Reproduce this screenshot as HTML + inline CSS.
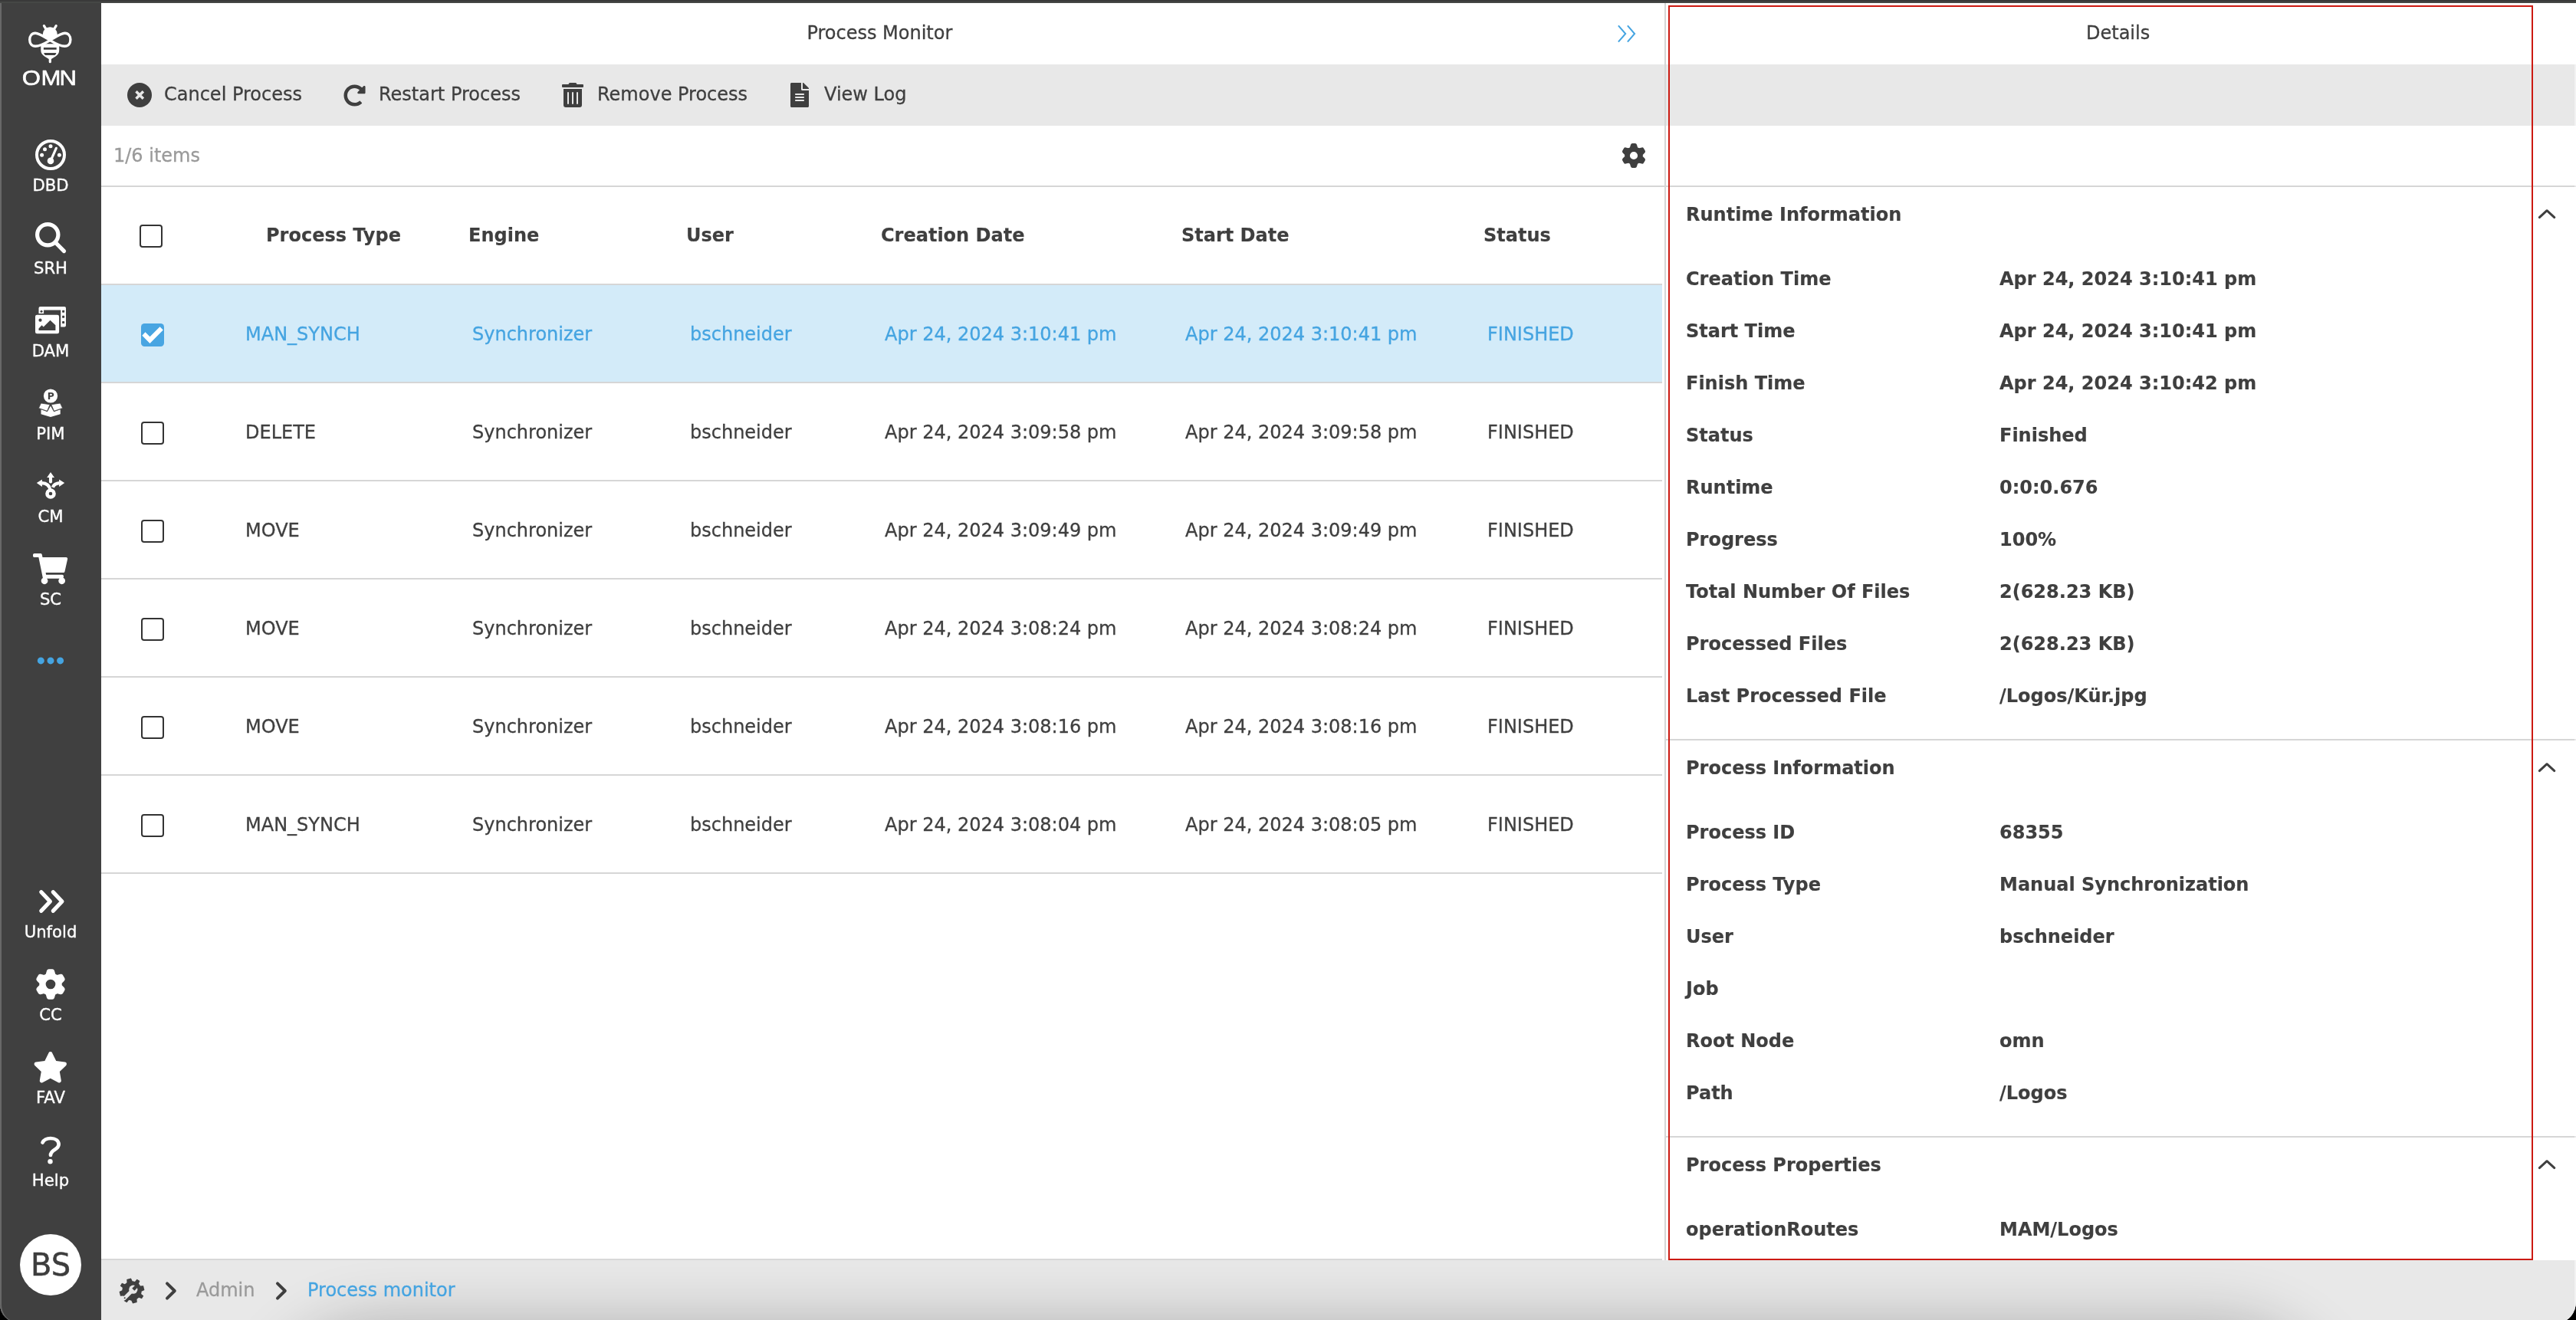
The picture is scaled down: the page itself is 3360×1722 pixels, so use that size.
<!DOCTYPE html>
<html lang="en">
<head>
<meta charset="utf-8">
<title>Process Monitor</title>
<style>
*{box-sizing:border-box;margin:0;padding:0}
html,body{width:3360px;height:1722px;overflow:hidden;background:#000}
body{position:relative;font-family:"DejaVu Sans","Liberation Sans",sans-serif;font-size:24px;line-height:28px;color:#3f3f3f;-webkit-text-stroke:0.3px}
#app{position:absolute;left:0;top:0;width:3360px;height:1725px;overflow:hidden;will-change:transform;background:#fff;border-radius:0 0 22px 23px / 0 0 27px 23px}
.abs,.t,.b,.ln,.cb,.ic{position:absolute}
.t,.b{white-space:nowrap;height:28px}
.b{font-weight:bold;-webkit-text-stroke:0.15px}
.blue{color:#45a4e1}
.gray{color:#9a9a9a}
.ln{background:#d6d6d6;height:2px}
#side{left:0;top:0;width:132px;height:1725px;background:#404040}
#side .lab{position:absolute;left:0;width:132px;text-align:center;color:#fff;font-size:21.2px;line-height:24px;height:24px;white-space:nowrap;-webkit-text-stroke:0.35px #fff}
#topbar{left:0;top:0;width:3360px;height:4px;background:linear-gradient(#3a3a3a 0,#3a3a3a 2px,#454745 2px,#454745 4px)}
#tool{left:132px;top:84px;width:3228px;height:80px;background:#e8e8e8}
#foot{left:132px;top:1644px;width:3228px;height:81px;background:#e8e8e8;overflow:hidden}
#foot i{position:absolute;left:215px;top:79px;width:2700px;height:300px;border-radius:160px;box-shadow:0 0 80px 0 rgba(0,0,0,.235)}
#sel{left:132px;top:372px;width:2036px;height:126px;background:#d3ebf9}
.cb{width:30px;height:30px;border:2px solid #333;border-radius:4px;background:#fff}
.cb.on{border:0;background:#48a5e2;border-radius:4.5px}
svg{position:absolute;overflow:visible}
</style>
</head>
<body>
<div id="app">
<!-- main chrome -->
<div class="abs" id="tool"></div>
<div class="abs" id="foot"><i></i></div>
<div class="abs" id="sel"></div>
<div class="ln" style="left:132px;top:242px;width:2039px;height:2px;"></div>
<div class="ln" style="left:132px;top:370px;width:2036px;height:2px;"></div>
<div class="ln" style="left:132px;top:498px;width:2036px;height:2px;"></div>
<div class="ln" style="left:132px;top:626px;width:2036px;height:2px;"></div>
<div class="ln" style="left:132px;top:754px;width:2036px;height:2px;"></div>
<div class="ln" style="left:132px;top:882px;width:2036px;height:2px;"></div>
<div class="ln" style="left:132px;top:1010px;width:2036px;height:2px;"></div>
<div class="ln" style="left:132px;top:1138px;width:2036px;height:2px;"></div>
<div class="ln" style="left:2171px;top:4px;width:2px;height:1640px"></div>
<div class="ln" style="left:2173px;top:242px;width:1187px;height:2px;"></div>
<div class="ln" style="left:2173px;top:964px;width:1187px;height:2px;"></div>
<div class="ln" style="left:2173px;top:1482px;width:1187px;height:2px;"></div>
<div class="ln" style="left:132px;top:1642px;width:2036px;height:2px;background:#d8d8d8;"></div>
<div class="t" style="left:1052.4px;top:29px;">Process Monitor</div>
<div class="t" style="left:214px;top:109px;">Cancel Process</div>
<div class="t" style="left:494px;top:109px;">Restart Process</div>
<div class="t" style="left:779px;top:109px;">Remove Process</div>
<div class="t" style="left:1075px;top:109px;">View Log</div>
<div class="t gray" style="left:148px;top:189px;">1/6 items</div>
<div class="b" style="left:347px;top:293px;">Process Type</div>
<div class="b" style="left:611px;top:293px;">Engine</div>
<div class="b" style="left:895px;top:293px;">User</div>
<div class="b" style="left:1149px;top:293px;">Creation Date</div>
<div class="b" style="left:1541px;top:293px;">Start Date</div>
<div class="b" style="left:1935px;top:293px;">Status</div>
<div class="cb" style="left:182px;top:293px"></div>
<div class="cb on" style="left:184px;top:422px"><svg width="30" height="30" viewBox="0 0 30 30" style="left:0;top:0"><path d="M1.4 15.7 5.5 11.3 11.5 17.3 24.5 4.2 28.8 8.5 11.5 26.1z" fill="#fff"/></svg></div>
<div class="t blue" style="left:320px;top:422px;">MAN_SYNCH</div>
<div class="t blue" style="left:616px;top:422px;">Synchronizer</div>
<div class="t blue" style="left:900px;top:422px;">bschneider</div>
<div class="t blue" style="left:1154px;top:422px;">Apr 24, 2024 3:10:41 pm</div>
<div class="t blue" style="left:1546px;top:422px;">Apr 24, 2024 3:10:41 pm</div>
<div class="t blue" style="left:1940px;top:422px;">FINISHED</div>
<div class="cb" style="left:184px;top:550px"></div>
<div class="t" style="left:320px;top:550px;">DELETE</div>
<div class="t" style="left:616px;top:550px;">Synchronizer</div>
<div class="t" style="left:900px;top:550px;">bschneider</div>
<div class="t" style="left:1154px;top:550px;">Apr 24, 2024 3:09:58 pm</div>
<div class="t" style="left:1546px;top:550px;">Apr 24, 2024 3:09:58 pm</div>
<div class="t" style="left:1940px;top:550px;">FINISHED</div>
<div class="cb" style="left:184px;top:678px"></div>
<div class="t" style="left:320px;top:678px;">MOVE</div>
<div class="t" style="left:616px;top:678px;">Synchronizer</div>
<div class="t" style="left:900px;top:678px;">bschneider</div>
<div class="t" style="left:1154px;top:678px;">Apr 24, 2024 3:09:49 pm</div>
<div class="t" style="left:1546px;top:678px;">Apr 24, 2024 3:09:49 pm</div>
<div class="t" style="left:1940px;top:678px;">FINISHED</div>
<div class="cb" style="left:184px;top:806px"></div>
<div class="t" style="left:320px;top:806px;">MOVE</div>
<div class="t" style="left:616px;top:806px;">Synchronizer</div>
<div class="t" style="left:900px;top:806px;">bschneider</div>
<div class="t" style="left:1154px;top:806px;">Apr 24, 2024 3:08:24 pm</div>
<div class="t" style="left:1546px;top:806px;">Apr 24, 2024 3:08:24 pm</div>
<div class="t" style="left:1940px;top:806px;">FINISHED</div>
<div class="cb" style="left:184px;top:934px"></div>
<div class="t" style="left:320px;top:934px;">MOVE</div>
<div class="t" style="left:616px;top:934px;">Synchronizer</div>
<div class="t" style="left:900px;top:934px;">bschneider</div>
<div class="t" style="left:1154px;top:934px;">Apr 24, 2024 3:08:16 pm</div>
<div class="t" style="left:1546px;top:934px;">Apr 24, 2024 3:08:16 pm</div>
<div class="t" style="left:1940px;top:934px;">FINISHED</div>
<div class="cb" style="left:184px;top:1062px"></div>
<div class="t" style="left:320px;top:1062px;">MAN_SYNCH</div>
<div class="t" style="left:616px;top:1062px;">Synchronizer</div>
<div class="t" style="left:900px;top:1062px;">bschneider</div>
<div class="t" style="left:1154px;top:1062px;">Apr 24, 2024 3:08:04 pm</div>
<div class="t" style="left:1546px;top:1062px;">Apr 24, 2024 3:08:05 pm</div>
<div class="t" style="left:1940px;top:1062px;">FINISHED</div>
<div class="t gray" style="left:256px;top:1669px;">Admin</div>
<div class="t blue" style="left:401px;top:1669px;">Process monitor</div>
<div class="t" style="left:2721px;top:29px;">Details</div>
<div class="b" style="left:2199px;top:266px;">Runtime Information</div>
<div class="b" style="left:2199px;top:350px;">Creation Time</div>
<div class="b" style="left:2608px;top:350px;">Apr 24, 2024 3:10:41 pm</div>
<div class="b" style="left:2199px;top:418px;">Start Time</div>
<div class="b" style="left:2608px;top:418px;">Apr 24, 2024 3:10:41 pm</div>
<div class="b" style="left:2199px;top:486px;">Finish Time</div>
<div class="b" style="left:2608px;top:486px;">Apr 24, 2024 3:10:42 pm</div>
<div class="b" style="left:2199px;top:554px;">Status</div>
<div class="b" style="left:2608px;top:554px;">Finished</div>
<div class="b" style="left:2199px;top:622px;">Runtime</div>
<div class="b" style="left:2608px;top:622px;">0:0:0.676</div>
<div class="b" style="left:2199px;top:690px;">Progress</div>
<div class="b" style="left:2608px;top:690px;">100%</div>
<div class="b" style="left:2199px;top:758px;">Total Number Of Files</div>
<div class="b" style="left:2608px;top:758px;">2(628.23 KB)</div>
<div class="b" style="left:2199px;top:826px;">Processed Files</div>
<div class="b" style="left:2608px;top:826px;">2(628.23 KB)</div>
<div class="b" style="left:2199px;top:894px;">Last Processed File</div>
<div class="b" style="left:2608px;top:894px;">/Logos/Kür.jpg</div>
<div class="b" style="left:2199px;top:988px;">Process Information</div>
<div class="b" style="left:2199px;top:1072px;">Process ID</div>
<div class="b" style="left:2608px;top:1072px;">68355</div>
<div class="b" style="left:2199px;top:1140px;">Process Type</div>
<div class="b" style="left:2608px;top:1140px;">Manual Synchronization</div>
<div class="b" style="left:2199px;top:1208px;">User</div>
<div class="b" style="left:2608px;top:1208px;">bschneider</div>
<div class="b" style="left:2199px;top:1276px;">Job</div>
<div class="b" style="left:2199px;top:1344px;">Root Node</div>
<div class="b" style="left:2608px;top:1344px;">omn</div>
<div class="b" style="left:2199px;top:1412px;">Path</div>
<div class="b" style="left:2608px;top:1412px;">/Logos</div>
<div class="b" style="left:2199px;top:1506px;">Process Properties</div>
<div class="b" style="left:2199px;top:1590px;">operationRoutes</div>
<div class="b" style="left:2608px;top:1590px;">MAM/Logos</div>
<div class="abs" style="left:2176px;top:7px;width:1128px;height:1637px;border:2px solid #cc1a12"></div>
<div class="abs" style="left:3358px;top:4px;width:2px;height:1720px;background:rgba(255,255,255,.45)"></div>
<!-- toolbar: cancel -->
<svg width="32" height="32" viewBox="0 0 32 32" style="left:166px;top:108px"><circle cx="16" cy="16" r="16" fill="#3f3f3f"/><path d="M11.500 11.300L20.900 20.700M20.900 11.300L11.500 20.700" stroke="#e8e8e8" stroke-width="3.500"/></svg>
<!-- toolbar: restart -->
<svg width="29" height="29" viewBox="0 0 512 512" style="left:447.600px;top:109.500px"><path fill="#3f3f3f" d="M256.455 8c66.269.119 126.437 26.233 170.859 68.685l35.715-35.715C478.149 25.851 504 36.559 504 57.941V192c0 13.255-10.745 24-24 24H345.941c-21.382 0-32.090-25.851-16.971-40.971l41.750-41.750c-30.864-28.899-70.801-44.907-113.230-45.273-92.398-.798-170.283 73.977-169.484 169.442C88.764 348.009 162.184 424 256 424c41.127 0 79.997-14.678 110.629-41.556 4.743-4.161 11.906-3.908 16.368.553l39.662 39.662c4.872 4.872 4.631 12.815-.482 17.433C378.202 479.813 319.926 504 256 504 119.034 504 8.001 392.967 8 256.002 7.999 119.193 119.646 7.755 256.455 8z"/></svg>
<!-- toolbar: trash -->
<svg width="28" height="32" viewBox="0 0 448 512" style="left:733px;top:108px"><path fill="#3f3f3f" d="M32 464a48 48 0 0 0 48 48h288a48 48 0 0 0 48-48V128H32zm272-256a16 16 0 0 1 32 0v224a16 16 0 0 1-32 0zm-96 0a16 16 0 0 1 32 0v224a16 16 0 0 1-32 0zm-96 0a16 16 0 0 1 32 0v224a16 16 0 0 1-32 0zM432 32H312l-9.400-18.700A24 24 0 0 0 281.100 0H166.800a23.720 23.720 0 0 0-21.400 13.300L136 32H16A16 16 0 0 0 0 48v32a16 16 0 0 0 16 16h416a16 16 0 0 0 16-16V48a16 16 0 0 0-16-16z"/></svg>
<!-- toolbar: file -->
<svg width="24" height="32" viewBox="0 0 384 512" style="left:1031px;top:108px"><path fill="#3f3f3f" d="M224 136V0H24C10.700 0 0 10.700 0 24v464c0 13.300 10.700 24 24 24h336c13.300 0 24-10.700 24-24V160H248c-13.200 0-24-10.800-24-24zm64 236c0 6.600-5.400 12-12 12H108c-6.600 0-12-5.400-12-12v-8c0-6.600 5.400-12 12-12h168c6.600 0 12 5.400 12 12v8zm0-64c0 6.600-5.400 12-12 12H108c-6.600 0-12-5.400-12-12v-8c0-6.600 5.400-12 12-12h168c6.600 0 12 5.400 12 12v8zm0-72v8c0 6.600-5.400 12-12 12H108c-6.600 0-12-5.400-12-12v-8c0-6.600 5.400-12 12-12h168c6.600 0 12 5.400 12 12zm96-114.100v6.100H256V0h6.100c6.400 0 12.500 2.500 17 7l97.900 98c4.500 4.500 7 10.600 7 16.900z"/></svg>
<!-- title >> -->
<svg width="30" height="30" viewBox="2105 29 30 30" style="left:2105px;top:29px"><path d="M2110.900 33.300L2120.200 44L2110.900 54.600M2122.900 33.300L2132.100 44L2122.900 54.600" fill="none" stroke="#45a4e1" stroke-width="2"/></svg>
<!-- settings gear -->
<svg width="40" height="40" viewBox="-20 -20 40 40" style="left:2111.050px;top:183px"><path fill="#3f3f3f" stroke="#3f3f3f" stroke-width="4.6" stroke-linejoin="round" fill-rule="evenodd" d="M-3.12 -9.08L-1.78 -13.68L1.78 -13.68L3.12 -9.08A9.60 9.60 0 0 1 6.30 -7.24L10.96 -8.39L12.74 -5.30L9.42 -1.84A9.60 9.60 0 0 1 9.42 1.84L12.74 5.30L10.96 8.39L6.30 7.24A9.60 9.60 0 0 1 3.12 9.08L1.78 13.68L-1.78 13.68L-3.12 9.08A9.60 9.60 0 0 1 -6.30 7.24L-10.96 8.39L-12.74 5.30L-9.42 1.84A9.60 9.60 0 0 1 -9.42 -1.84L-12.74 -5.30L-10.96 -8.39L-6.30 -7.24A9.60 9.60 0 0 1 -3.12 -9.08ZM7.40 0A7.40 7.40 0 1 0 -7.40 0A7.40 7.40 0 1 0 7.40 0Z"/></svg>
<!-- panel chevrons -->
<svg width="30" height="20" viewBox="3307 268 30 20" style="left:3307px;top:268px"><path d="M3312.300 283.600L3322.050 274.700L3331.800 283.600" fill="none" stroke="#3f3f3f" stroke-width="3" stroke-linecap="round" stroke-linejoin="round"/></svg>
<svg width="30" height="20" viewBox="3307 268 30 20" style="left:3307px;top:990px"><path d="M3312.300 283.600L3322.050 274.700L3331.800 283.600" fill="none" stroke="#3f3f3f" stroke-width="3" stroke-linecap="round" stroke-linejoin="round"/></svg>
<svg width="30" height="20" viewBox="3307 268 30 20" style="left:3307px;top:1508px"><path d="M3312.300 283.600L3322.050 274.700L3331.800 283.600" fill="none" stroke="#3f3f3f" stroke-width="3" stroke-linecap="round" stroke-linejoin="round"/></svg>
<!-- breadcrumb -->
<svg width="34" height="34" viewBox="-17 -17 34 34" style="left:155px;top:1667px">
 <g transform="rotate(-14)"><path fill="#3f3f3f" d="M-2.900 -16.200H2.900L3.700 -12.100A12.500 12.500 0 0 1 6.700 -10.800L10.100 -13.200L13.200 -10.100L10.800 -6.700A12.500 12.500 0 0 1 12.100 -3.700L16.200 -2.900V2.900L12.100 3.700A12.500 12.500 0 0 1 10.800 6.700L13.200 10.100L10.100 13.200L6.700 10.800A12.500 12.500 0 0 1 3.700 12.100L2.900 16.200H-2.900L-3.700 12.100A12.500 12.500 0 0 1 -6.700 10.800L-10.100 13.200L-13.200 10.100L-10.800 6.700A12.500 12.500 0 0 1 -12.100 3.700L-16.200 2.900V-2.900L-12.100 -3.700A12.500 12.500 0 0 1 -10.800 -6.700L-13.200 -10.100L-10.100 -13.200L-6.700 -10.800A12.500 12.500 0 0 1 -3.700 -12.100Z"/></g>
 <path d="M-10 10L0.500 -0.500" stroke="#e6e6e6" stroke-width="4.600" stroke-linecap="round"/>
 <circle cx="1.800" cy="-1.800" r="5.600" fill="#e6e6e6"/>
 <path d="M1.800 -1.800L9 -9" stroke="#3f3f3f" stroke-width="4.400"/>
 <circle cx="-9.300" cy="9.300" r="1" fill="#3f3f3f"/>
</svg>
<svg width="20" height="30" viewBox="213 1669 20 30" style="left:213px;top:1669px"><path d="M218 1674.400L227.800 1684L218 1693.600" fill="none" stroke="#3f3f3f" stroke-width="4" stroke-linecap="round" stroke-linejoin="round"/></svg>
<svg width="20" height="30" viewBox="213 1669 20 30" style="left:357.400px;top:1669px"><path d="M218 1674.400L227.800 1684L218 1693.600" fill="none" stroke="#3f3f3f" stroke-width="4" stroke-linecap="round" stroke-linejoin="round"/></svg>

<div class="abs" id="side">
<div class="abs" style="left:0;top:0;width:132px;height:1725px;border-left:2px solid #686868;border-radius:0 0 0 23px"></div>
<div class="lab" style="top:230px">DBD</div>
<div class="lab" style="top:338px">SRH</div>
<div class="lab" style="top:446px">DAM</div>
<div class="lab" style="top:554px">PIM</div>
<div class="lab" style="top:662px">CM</div>
<div class="lab" style="top:770px">SC</div>
<div class="lab" style="top:1204px">Unfold</div>
<div class="lab" style="top:1312px">CC</div>
<div class="lab" style="top:1420px">FAV</div>
<div class="lab" style="top:1528px">Help</div>
<div class="abs" style="left:26px;top:1610px;width:80px;height:80px;border-radius:50%;background:#fff;color:#3d3d3d;text-align:center;font-size:40px;line-height:81px;-webkit-text-stroke:0.5px">BS</div>
<!-- OMN logo -->
<svg width="132" height="130" viewBox="0 0 132 130" style="left:0;top:0">
 <g fill="none" stroke="#fff" stroke-linecap="round" stroke-linejoin="round">
  <path d="M53.3 57.3H77.2V65.5Q77.2 70.5 72.6 73.4L65.3 78L58 73.4Q53.3 70.5 53.3 65.5Z" fill="#fff" stroke="none"/>
  <path d="M56.9 61.9H73.7V64.7H56.9ZM57.2 69H73.4Q73 71 71.6 72H59Q57.6 71 57.2 69Z" fill="#404040" stroke="none"/>
  <path d="M55.8 44.7A9.5 9.5 0 0 1 74.8 44.7C74.8 48 72 51 65.3 54C58.600 51 55.8 48 55.8 44.7Z" fill="#fff" stroke="none"/>
  <path d="M65.300 52.600C57 47.500 51 43.300 46 43.300C41.500 43.300 38.700 47 38.700 51.800C38.700 56.600 41.500 60.300 46.200 60.300C51 60.300 57 57.600 65.300 52.600Z" fill="#404040" stroke-width="3.400"/>
  <path d="M65.300 52.600C73.600 47.500 79.600 43.300 84.600 43.300C89.100 43.300 91.900 47 91.900 51.800C91.900 56.600 89.100 60.300 84.400 60.300C79.600 60.300 73.600 57.600 65.300 52.600Z" fill="#404040" stroke-width="3.400"/>
  <path d="M57.400 33.600L60.400 38.600M73.200 33.600L70.200 38.600M65.300 77V80.700" stroke-width="3.200"/>
 </g>
 <text transform="scale(1.1,1)" x="26.200 48.600 70.450" y="110.850" font-family="'Liberation Sans',sans-serif" font-size="28.300" fill="#fff" stroke="#fff" stroke-width="0.600" stroke-linejoin="round">OMN</text>
</svg>
<!-- DBD -->
<svg width="40" height="40" viewBox="0 0 40 40" style="left:46px;top:181.800px">
 <circle cx="20" cy="20" r="18" fill="none" stroke="#fff" stroke-width="4"/>
 <g fill="#fff"><circle cx="8.600" cy="20.200" r="2.500"/><circle cx="12.500" cy="12.700" r="2.500"/><circle cx="20" cy="8.800" r="2.500"/><circle cx="31.400" cy="20.200" r="2.500"/><circle cx="20" cy="27.900" r="4.300"/></g>
 <path d="M20 27.900L27.300 11.300" stroke="#fff" stroke-width="3.200" stroke-linecap="round"/>
</svg>
<!-- SRH -->
<svg width="40" height="40" viewBox="0 0 40 40" style="left:46px;top:290px">
 <circle cx="16.250" cy="16.200" r="13.650" fill="none" stroke="#fff" stroke-width="5.200"/>
 <path d="M26.500 26.500L37.500 37.600" stroke="#fff" stroke-width="5.200" stroke-linecap="round"/>
</svg>
<!-- DAM -->
<svg width="40" height="36" viewBox="46 399.800 40 36" style="left:46px;top:399.800px">
 <path d="M52.500 399.800H84A2 2 0 0 1 86 401.800V424.400A2 2 0 0 1 84 426.400H79.200V404.400H57.100V408.900H50.500V401.800A2 2 0 0 1 52.500 399.800Z" fill="#fff"/>
 <circle cx="54" cy="406" r="1.500" fill="#404040"/>
 <g fill="#404040"><rect x="81.100" y="404.500" width="3" height="3" rx=".6"/><rect x="81.100" y="411.600" width="3" height="3" rx=".6"/><rect x="81.100" y="418.900" width="3" height="3" rx=".6"/></g>
 <rect x="46" y="410.500" width="31.100" height="24.500" rx="2.300" fill="#fff"/>
 <circle cx="52.500" cy="417.500" r="2.100" fill="#404040"/>
 <path d="M50.500 430.700V428.200L54.600 424.100L56.700 426.200L65.500 417.500L72.400 424.100V430.700Z" fill="#404040"/>
</svg>
<!-- PIM -->
<svg width="40" height="40" viewBox="46 506 40 40" style="left:46px;top:506px">
 <circle cx="66" cy="516.500" r="9.100" fill="#fff"/>
 <text x="66.300" y="521.100" text-anchor="middle" font-family="'DejaVu Sans',sans-serif" font-weight="bold" font-size="12.300" fill="#404040">P</text>
 <path d="M53.500 534.300L61.800 537.300L66 529.600L70.200 537.300L78.700 534.300V540.300L66 544L53.500 540.300Z" fill="#fff"/>
 <path d="M53.500 526L65.100 527.800L61.500 536.200L50.500 532.400Z" fill="#fff" stroke="#404040" stroke-width=".7"/>
 <path d="M78.500 526L66.900 527.800L70.500 536.200L81.600 532.400Z" fill="#fff" stroke="#404040" stroke-width=".7"/>
</svg>
<!-- CM -->
<svg width="40" height="40" viewBox="46 614 40 40" style="left:46px;top:614px">
 <circle cx="66" cy="644" r="4.550" fill="none" stroke="#fff" stroke-width="4.500"/>
 <path d="M66 616L71 622.900H68.050V628.500A2.050 2.050 0 0 1 63.950 628.500V622.900H61.200Z" fill="#fff"/>
 <path d="M47.800 629.900L54.900 625.400V634.900Z M84.200 629.900L77.100 625.400V634.900Z" fill="#fff"/>
 <path d="M54.500 630.200C60.500 630.400 64.600 633.500 65.600 639.500" fill="none" stroke="#fff" stroke-width="4.300"/>
 <path d="M77.500 630.200C73.300 630.500 70.300 632.200 68.900 635.700" fill="none" stroke="#fff" stroke-width="4.300"/>
</svg>
<!-- SC -->
<svg width="45.200" height="40.200" viewBox="0 0 576 512" style="left:43.300px;top:721.800px"><path fill="#fff" d="M528.120 301.319l47.273-208C578.806 78.301 567.391 64 551.990 64H159.208l-9.166-44.810C147.758 8.021 137.930 0 126.529 0H24C10.745 0 0 10.745 0 24v16c0 13.255 10.745 24 24 24h69.883l70.248 343.435C147.325 417.100 136 435.222 136 456c0 30.928 25.072 56 56 56s56-25.072 56-56c0-15.674-6.447-29.835-16.824-40h209.647C430.447 426.165 424 440.326 424 456c0 30.928 25.072 56 56 56s56-25.072 56-56c0-22.172-12.888-41.332-31.579-50.405l5.517-24.276c3.413-15.018-8.002-29.319-23.403-29.319H218.117l-6.545-32h293.145c11.206 0 20.920-7.754 23.403-18.681z"/></svg>
<!-- dots -->
<svg width="40" height="12" viewBox="46 856 40 12" style="left:46px;top:856px"><g fill="#45a4e1"><circle cx="53.300" cy="861.900" r="4.500"/><circle cx="66" cy="861.900" r="4.500"/><circle cx="78.600" cy="861.900" r="4.500"/></g></svg>
<!-- Unfold -->
<svg width="40" height="36" viewBox="46 1158 40 36" style="left:46px;top:1158px"><path d="M53.800 1163.700L65.400 1176L53.800 1188.300M69.300 1163.700L80.900 1176L69.300 1188.300" fill="none" stroke="#fff" stroke-width="5.200" stroke-linecap="round" stroke-linejoin="round"/></svg>
<!-- CC gear -->
<svg width="50" height="50" viewBox="-20.130 -20.130 40.260 40.260" style="left:41px;top:1259px"><path fill="#fff" stroke="#fff" stroke-width="4.6" stroke-linejoin="round" fill-rule="evenodd" d="M-3.12 -9.08L-1.78 -13.68L1.78 -13.68L3.12 -9.08A9.60 9.60 0 0 1 6.30 -7.24L10.96 -8.39L12.74 -5.30L9.42 -1.84A9.60 9.60 0 0 1 9.42 1.84L12.74 5.30L10.96 8.39L6.30 7.24A9.60 9.60 0 0 1 3.12 9.08L1.78 13.68L-1.78 13.68L-3.12 9.08A9.60 9.60 0 0 1 -6.30 7.24L-10.96 8.39L-12.74 5.30L-9.42 1.84A9.60 9.60 0 0 1 -9.42 -1.84L-12.74 -5.30L-10.96 -8.39L-6.30 -7.24A9.60 9.60 0 0 1 -3.12 -9.08ZM7.40 0A7.40 7.40 0 1 0 -7.40 0A7.40 7.40 0 1 0 7.40 0Z"/></svg>
<!-- FAV star -->
<svg width="45.600" height="40.500" viewBox="0 0 576 512" style="left:43.200px;top:1371.500px"><path fill="#fff" d="M259.300 17.800L194 150.200 47.900 171.500c-26.200 3.800-36.700 36.100-17.700 54.600l105.700 103-25 145.500c-4.500 26.300 23.200 46 46.400 33.700L288 439.600l130.700 68.700c23.200 12.200 50.900-7.400 46.400-33.700l-25-145.500 105.700-103c19-18.500 8.500-50.800-17.700-54.600L382 150.200 316.700 17.800c-11.700-23.600-45.600-23.900-57.400 0z"/></svg>
<!-- Help ? -->
<svg width="40" height="40" viewBox="46 1480 40 40" style="left:46px;top:1480px">
 <path d="M55.500 1490.500C57.500 1486.500 61.500 1485 66 1485C72 1485 76.600 1488 76.600 1493C76.600 1500 66 1499.500 66 1507" fill="none" stroke="#fff" stroke-width="4.700" stroke-linecap="round"/>
 <circle cx="65.500" cy="1515.300" r="3.200" fill="#fff"/>
</svg>

</div>
<div class="abs" id="topbar"></div>
</div>
</body>
</html>
